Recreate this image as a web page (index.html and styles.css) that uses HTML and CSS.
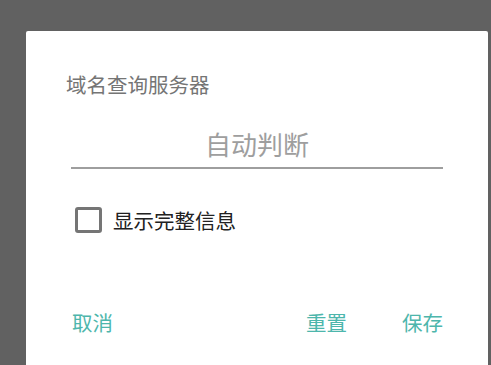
FILE: index.html
```html
<!DOCTYPE html>
<html lang="zh">
<head>
<meta charset="utf-8">
<link rel="stylesheet" href="styles.css">
</head>
<body>
<div class="dialog">
  <div class="title">域名查询服务器</div>
  <div class="field"><span class="field-text">自动判断</span></div>
  <label class="check-row">
    <span class="box"></span>
    <span class="check-label">显示完整信息</span>
  </label>
  <div class="actions">
    <span class="btn">取消</span>
    <span class="spacer"></span>
    <span class="btn">重置</span>
    <span class="btn btn-save">保存</span>
  </div>
</div>
</body>
</html>
```
FILE: styles.css
```css
html, body {
  margin: 0;
  padding: 0;
  background: #616161;
  width: 491px;
  height: 365px;
  overflow: hidden;
  font-family: "Noto Sans CJK SC", "Noto Sans", sans-serif;
}
.dialog {
  margin: 31px 0 0 26px;
  width: 462px;
  height: 334px;
  background: #ffffff;
  border-radius: 2px 2px 0 0;
  box-sizing: border-box;
  padding: 39px 40px 0 40px;
}
.title {
  font-size: 20.5px;
  line-height: 28px;
  color: #757575;
}
.field {
  margin: 29px 5px 0 5px;
  border-bottom: 2px solid #9e9e9e;
  text-align: center;
  padding-bottom: 6px;
}
.field-text {
  display: block;
  font-size: 26px;
  line-height: 34px;
  color: #9e9e9e;
}
.check-row {
  display: flex;
  align-items: center;
  margin-top: 37px;
  padding-left: 9px;
  height: 28px;
}
.box {
  width: 21px;
  height: 20px;
  border: 3px solid #757575;
  border-radius: 3px;
}
.check-label {
  margin-left: 11px;
  font-size: 20.5px;
  line-height: 28px;
  color: #212121;
}
.actions {
  display: flex;
  align-items: center;
  margin-top: 74px;
}
.btn {
  font-size: 20.5px;
  line-height: 28px;
  color: #4db6ac;
  padding: 0 6px;
}
.spacer { flex: 1; }
.btn-save {
  margin-left: 43px;
  padding-right: 5px;
}
```
